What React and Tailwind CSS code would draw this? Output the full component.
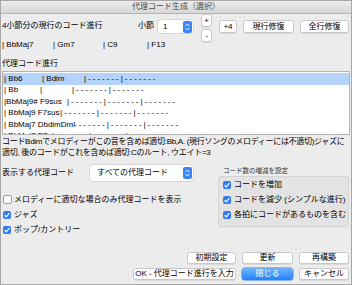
import React from "react";

const Stepper = () => (
  <span className="w-[9px] h-[12px] rounded-[2px] bg-[#3a86f7] flex items-center justify-center">
    <svg width="7" height="10" viewBox="0 0 7 10">
      <path d="M1.5 4 L3.5 2 L5.5 4 M1.5 6 L3.5 8 L5.5 6" stroke="white" strokeWidth="1" fill="none" />
    </svg>
  </span>
);

const Check = ({ checked }) =>
  checked ? (
    <span className="w-[8px] h-[8px] rounded-[2px] bg-[#2f7bf5] flex items-center justify-center shrink-0">
      <svg width="8" height="8" viewBox="0 0 8 8">
        <path d="M1.6 4.2 L3.3 5.8 L6.4 2.2" stroke="white" strokeWidth="1.2" fill="none" />
      </svg>
    </span>
  ) : (
    <span className="w-[9px] h-[9px] rounded-[2px] border border-[#7f9fd6] bg-white shrink-0" />
  );

const Btn = ({ w, children }) => (
  <div
    className={`${w} h-full bg-white rounded-[3px] border border-[#c8c8c8] shadow-[0_1px_0_rgba(0,0,0,0.08)] flex items-center justify-center leading-none`}
  >
    {children}
  </div>
);

const Dash = ({ children }) => <span className="tracking-[2px]">{children}</span>;

const rows = [
  { cols: [["| Bb6", "w-[38px]"], ["| Bdim", "w-[42px]"]], rest: "|-------|-------", sel: true },
  { cols: [["| Bb", "w-[36px]"], ["|", "w-[32px]"]], rest: "|-------|-------" },
  { cols: [["|BbMaj9# F9sus", "w-[63px]"]], rest: "|-------|-------|-------" },
  { cols: [["| BbMaj9 F7sus", "w-[56px]"]], rest: "|-------|-------|-------" },
  { cols: [["| BbMaj7 DbdimDml", "w-[70px]"]], rest: "-------|-------|-------" },
  { cols: [["| BbMaj7 E7", "w-[48px]"]], rest: "|-------|-------|-------" },
];

export default function App() {
  return (
    <div className="w-[352px] h-[285px] bg-[#ececec] border border-[#a6a6a6] flex flex-col text-[8px] text-black font-['Liberation_Sans','Noto_Sans_CJK_JP',sans-serif] overflow-hidden">
      {/* title bar */}
      <div className="h-[13px] shrink-0 bg-linear-to-b from-[#ececec] to-[#d6d6d6] border-b border-[#b4b4b4] flex items-center justify-center text-[#4a4a4a] leading-none">
        代理コード生成（選択）
      </div>

      {/* top row */}
      <div className="h-[28px] shrink-0 flex items-start pl-[1px]">
        <div className="w-[136px] mt-[7px] leading-[10px] whitespace-nowrap">4小節分の現行のコード進行</div>
        <div className="w-[20px] mt-[7px] leading-[10px]">小節</div>
        <div className="w-[35px] h-[13px] mt-[6px] bg-white rounded-[3px] shadow-[0_0_0_0.5px_#c0c0c0] flex items-center justify-between pl-[5px] pr-[1px]">
          <span>1</span>
          <Stepper />
        </div>
        <div className="ml-[8px] w-[11px] flex flex-col gap-[2px]">
          <div className="h-[13px]"><Btn w="w-[11px]">+</Btn></div>
          <div className="h-[13px]"><Btn w="w-[11px]">-</Btn></div>
        </div>
        <div className="ml-[7px] mt-[6px] h-[13px]"><Btn w="w-[18px]">+4</Btn></div>
        <div className="ml-[6px] mt-[6px] h-[13px]"><Btn w="w-[51px]">現行修復</Btn></div>
        <div className="ml-[6px] mt-[6px] h-[13px]"><Btn w="w-[49px]">全行修復</Btn></div>
      </div>

      {/* current chords */}
      <div className="-mt-[2px] h-[10px] shrink-0 flex leading-[10px] pl-[1px]">
        <span className="w-[51px]">| BbMaj7</span>
        <span className="w-[50px]">| Gm7</span>
        <span className="w-[44px]">| C9</span>
        <span>| F13</span>
      </div>

      <div className="mt-[9px] h-[10px] shrink-0 leading-[10px] pl-[1px]">代理コード進行</div>

      {/* list */}
      <div className="mt-[2px] ml-[1px] w-[348px] h-[64px] shrink-0 bg-white border border-[#b4b4b4] overflow-hidden pt-[1px]">
        {rows.map((r, i) => (
          <div
            key={i}
            className={`h-[11.5px] flex items-center whitespace-pre pl-[1px] ${r.sel ? "bg-[#b4d3fb]" : ""}`}
          >
            {r.cols.map(([t, w], j) => (
              <span key={j} className={`${w} shrink-0`}>{t}</span>
            ))}
            <Dash>{r.rest}</Dash>
          </div>
        ))}
      </div>

      {/* description */}
      <div className="mt-[1px] h-[22px] shrink-0 leading-[11px] pl-[1px] whitespace-nowrap tracking-[-0.3px]">
        <div>コードBdimでメロディーがこの音を含めば適切:Bb,A. (現行ソングのメロディーには不適切)ジャズに</div>
        <div>適切, 後のコードがこれを含めば適切:Cのルート, ウエイト=3</div>
      </div>

      {/* options */}
      <div className="mt-[7px] flex shrink-0">
        <div className="w-[217px] flex flex-col">
          <div className="h-[16px] flex items-center pl-[1px]">
            <span className="w-[88px]">表示する代理コード</span>
            <div className="w-[103px] h-[16px] bg-white rounded-[3px] shadow-[0_0_0_0.5px_#c0c0c0] flex items-center justify-between pl-[7px] pr-[1px]">
              <span>すべての代理コード</span>
              <Stepper />
            </div>
          </div>
          <div className="mt-[11px] flex flex-col pl-[2px]">
            <div className="h-[15px] flex items-center gap-[2px]">
              <Check />
              <span>メロディーに適切な場合のみ代理コードを表示</span>
            </div>
            <div className="h-[15px] flex items-center gap-[3px]">
              <Check checked />
              <span>ジャズ</span>
            </div>
            <div className="h-[15px] flex items-center gap-[3px]">
              <Check checked />
              <span>ポップ/カントリー</span>
            </div>
          </div>
        </div>
        <div className="w-[131px] flex flex-col">
          <div className="h-[11px] pt-[1px] pl-[5px] leading-[10px] text-[6.5px] text-[#333]">コード数の増減を設定</div>
          <div className="bg-[#e3e3e3] border border-[#d4d4d4] rounded-[3px] pl-[4px] pb-[4px]">
            <div className="h-[15px] flex items-center gap-[3px]">
              <Check checked />
              <span>コードを増加</span>
            </div>
            <div className="h-[15px] flex items-center gap-[3px]">
              <Check checked />
              <span>コードを減少 (シンプルな進行)</span>
            </div>
            <div className="h-[15px] flex items-center gap-[3px]">
              <Check checked />
              <span>各拍にコードがあるものを含む</span>
            </div>
          </div>
        </div>
      </div>

      {/* buttons */}
      <div className="mt-auto mb-[4px] flex flex-col gap-[4px] pr-[2px]">
        <div className="h-[12px] flex justify-end gap-[6px]">
          <Btn w="w-[49px]">初期設定</Btn>
          <Btn w="w-[51px]">更新</Btn>
          <Btn w="w-[50px]">再構築</Btn>
        </div>
        <div className="h-[12px] flex justify-end gap-[6px]">
          <Btn w="w-[103px]">OK - 代理コード進行を入力</Btn>
          <div className="w-[51px] h-full rounded-[3px] bg-linear-to-b from-[#6db3fb] to-[#1b82fb] text-white flex items-center justify-center leading-none shadow-[0_0_0_0.5px_#2a78e0]">
            閉じる
          </div>
          <Btn w="w-[50px]">キャンセル</Btn>
        </div>
      </div>
    </div>
  );
}
